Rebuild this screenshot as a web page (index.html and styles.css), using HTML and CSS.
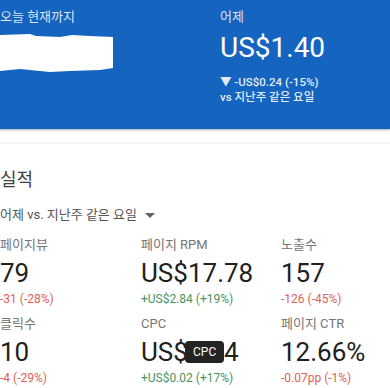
FILE: index.html
```html
<!DOCTYPE html>
<html lang="ko">
<head>
    <meta charset="UTF-8">
    <meta name="viewport" content="width=device-width, initial-scale=1.0">
    <title>수입</title>
    <link rel="stylesheet" href="styles.css">
</head>
<body>

    <header class="hero">
        <div class="hero-col">
            <div class="hero-label">오늘 현재까지</div>
            <!-- 가려진 금액 -->
            <svg class="blot" width="116" height="42" viewBox="0 0 116 42">
                <path d="M0 2 L30 1 L36 3 L60 4 L72 2 L90 3 L113 4 L113 35 L100 37 L70 38 L50 39 L20 36 L0 38 Z" fill="#fff"/>
            </svg>
        </div>
        <div class="hero-col">
            <div class="hero-label">어제</div>
            <div class="hero-value">US$1.40</div>
            <div class="hero-delta first">▼ -US$0.24 (-15%)</div>
            <div class="hero-delta">vs 지난주 같은 요일</div>
        </div>
    </header>

    <div class="divider"></div>

    <section class="perf">
        <h2>실적</h2>
        <div class="range">어제 vs. 지난주 같은 요일 <span class="caret"></span></div>

        <div class="metrics">
            <div class="metric">
                <div class="metric-label">페이지뷰</div>
                <div class="metric-value">79</div>
                <div class="metric-delta down">-31 (-28%)</div>
            </div>
            <div class="metric">
                <div class="metric-label">페이지 RPM</div>
                <div class="metric-value">US$17.78</div>
                <div class="metric-delta up">+US$2.84 (+19%)</div>
            </div>
            <div class="metric">
                <div class="metric-label">노출수</div>
                <div class="metric-value">157</div>
                <div class="metric-delta down">-126 (-45%)</div>
            </div>
            <div class="metric">
                <div class="metric-label">클릭수</div>
                <div class="metric-value">10</div>
                <div class="metric-delta down">-4 (-29%)</div>
            </div>
            <div class="metric">
                <div class="metric-label">CPC</div>
                <div class="metric-value">US$0.14</div>
                <div class="metric-delta up">+US$0.02 (+17%)</div>
                <span class="tooltip">CPC</span>
            </div>
            <div class="metric">
                <div class="metric-label">페이지 CTR</div>
                <div class="metric-value">12.66%</div>
                <div class="metric-delta down">-0.07pp (-1%)</div>
            </div>
        </div>
    </section>

</body>
</html>
```

FILE: styles.css
```css
body {
    margin: 0;
    font-family: Roboto, "Noto Sans CJK KR", sans-serif;
    background-color: #fff;
    color: #212121;
    overflow: hidden;
}
.hero {
    display: grid;
    grid-template-columns: 220px 1fr;
    height: 129px;
    background-color: #1565c0;
    color: #fff;
    box-shadow: 0 1px 2px rgba(0, 0, 0, 0.35);
}
.hero-col {
    padding-top: 7px;
}
.hero-label {
    font-size: 13px;
    line-height: 20px;
    color: rgba(255, 255, 255, 0.85);
}
.blot {
    display: block;
    margin-top: 6px;
}
.hero-value {
    font-size: 28px;
    line-height: 36px;
    margin-top: 3px;
}
.hero-delta {
    font-size: 11.5px;
    font-weight: 500;
    line-height: 15px;
    color: rgba(255, 255, 255, 0.9);
}
.hero-delta.first {
    margin-top: 9px;
}
.divider {
    height: 2px;
    margin-top: 13px;
    background-color: #f5f5f5;
}
.perf {
    padding-top: 24px;
}
.perf h2 {
    margin: 0;
    font-size: 18px;
    font-weight: 400;
    line-height: 24px;
    color: #424242;
}
.range {
    margin-top: 14px;
    font-size: 13px;
    line-height: 18px;
    color: #555;
}
.caret {
    display: inline-block;
    margin-left: 5px;
    vertical-align: middle;
    border-left: 5px solid transparent;
    border-right: 5px solid transparent;
    border-top: 5px solid #616161;
}
.metrics {
    display: grid;
    grid-template-columns: 141px 140px 1fr;
    row-gap: 8px;
    margin-top: 12px;
}
.metric {
    position: relative;
}
.metric-label {
    font-size: 13px;
    line-height: 18px;
    color: #757575;
}
.metric-value {
    font-size: 26px;
    line-height: 34px;
    margin-top: 2px;
    color: #212121;
}
.metric-delta {
    margin-top: 1px;
    font-size: 12px;
    line-height: 16px;
}
.metric-delta.down {
    color: #e06055;
}
.metric-delta.up {
    color: #4a9460;
}
.tooltip {
    position: absolute;
    left: 44px;
    top: 26px;
    padding: 4px 8px;
    border-radius: 4px;
    background-color: #232323;
    color: #fff;
    font-size: 12px;
    line-height: 14px;
}
```
